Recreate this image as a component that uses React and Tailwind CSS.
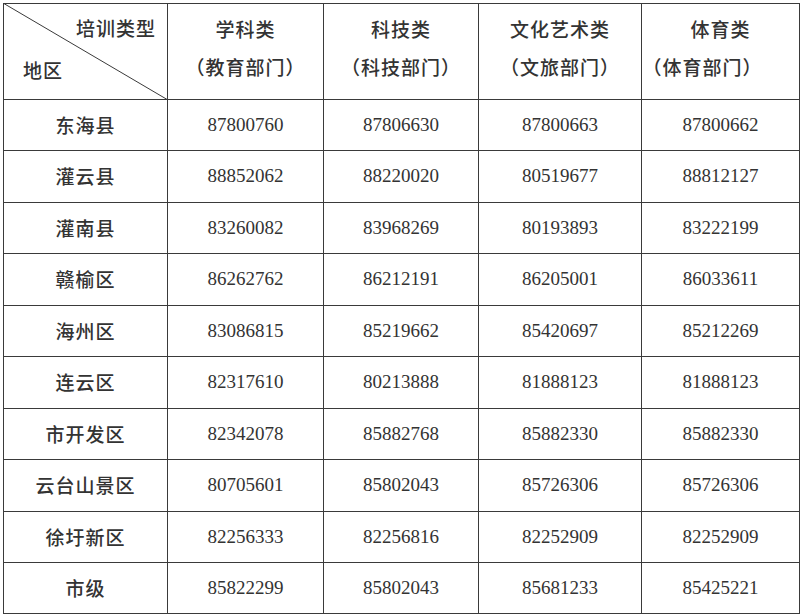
import React from "react";

const cols = [
  { title: "学科类", dept: "（教育部门）" },
  { title: "科技类", dept: "（科技部门）" },
  { title: "文化艺术类", dept: "（文旅部门）" },
  { title: "体育类", dept: "（体育部门）", shift: true },
];

const rows = [
  ["东海县", "87800760", "87806630", "87800663", "87800662"],
  ["灌云县", "88852062", "88220020", "80519677", "88812127"],
  ["灌南县", "83260082", "83968269", "80193893", "83222199"],
  ["赣榆区", "86262762", "86212191", "86205001", "86033611"],
  ["海州区", "83086815", "85219662", "85420697", "85212269"],
  ["连云区", "82317610", "80213888", "81888123", "81888123"],
  ["市开发区", "82342078", "85882768", "85882330", "85882330"],
  ["云台山景区", "80705601", "85802043", "85726306", "85726306"],
  ["徐圩新区", "82256333", "82256816", "82252909", "82252909"],
  ["市级", "85822299", "85802043", "85681233", "85425221"],
];

const cjk = "font-['Noto_Sans_CJK_SC',sans-serif]";
const num = "font-['Liberation_Serif','Noto_Sans_CJK_SC',serif]";

export default function App() {
  return (
    <div className="w-[800px] h-[615px] bg-white pl-[3px] pt-[3px]">
      <div className="relative w-[797px] grid grid-cols-[163px_155px_154px_162px_157px] grid-rows-[95px_50px_51px_50px_51px_50px_51px_50px_51px_50px_50px] gap-px p-px bg-[#3a3a3a] text-[#333]">
        {/* corner cell */}
        <div className={`relative bg-white ${cjk} text-[19px] font-medium`}>
          <svg className="absolute inset-0" width="163" height="95" viewBox="0 0 163 95">
            <line x1="-1" y1="-1" x2="164" y2="96" stroke="#3a3a3a" strokeWidth="1" />
          </svg>
          <div className="absolute right-[11px] top-[10px] tracking-[1px]">培训类型</div>
          <div className="absolute left-[19px] top-[52px] tracking-[1px]">地区</div>
        </div>
        {cols.map((c) => (
          <div
            key={c.title}
            className={`bg-white flex flex-col items-center pt-[11px] gap-[10px] ${cjk} text-[19px] font-medium tracking-[1px]`}
          >
            <div className="leading-[28px]">{c.title}</div>
            <div className={`leading-[28px] ${c.shift ? "pr-[36px]" : ""}`}>{c.dept}</div>
          </div>
        ))}
        {rows.map((r) =>
          r.map((v, i) => (
            <div
              key={r[0] + i}
              className={`bg-white flex items-center justify-center ${
                i === 0 ? `${cjk} text-[19px] font-medium tracking-[1px]` : `${num} text-[19px]`
              }`}
            >
              {v}
            </div>
          ))
        )}
      </div>
    </div>
  );
}
